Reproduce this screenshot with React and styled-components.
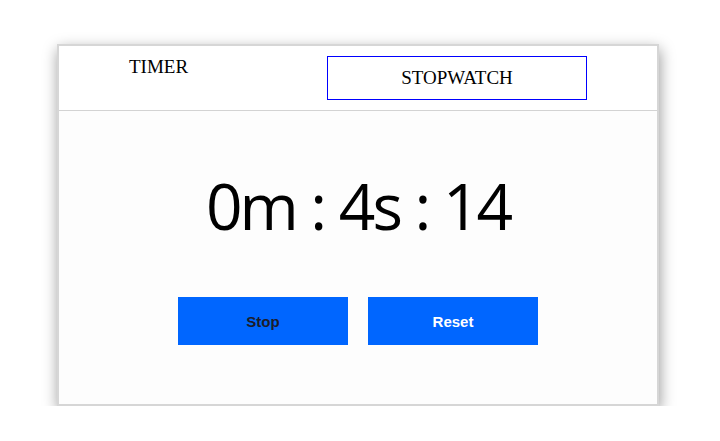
import React, { useState } from "react";
import styled, { createGlobalStyle } from "styled-components";

const GlobalStyle = createGlobalStyle`
  body {
    margin: 0;
    background: #ffffff;
    font-family: "Liberation Serif", serif;
  }
`;

function App() {
  const [tab, setTab] = useState("stopwatch");
  return (
    <>
      <GlobalStyle />
      <Page>
        <Card>
          <Tabs>
            <Tab active={tab === "timer"} onClick={() => setTab("timer")}>
              TIMER
            </Tab>
            <Tab active={tab === "stopwatch"} onClick={() => setTab("stopwatch")}>
              STOPWATCH
            </Tab>
          </Tabs>
          <Body>
            <Time>0m : 4s : 14</Time>
            <Controls>
              <Button>Stop</Button>
              <Button light>Reset</Button>
            </Controls>
          </Body>
        </Card>
      </Page>
    </>
  );
}
export default App;

const Page = styled.div`
  padding: 44px 0 0 57px;
`;

const Card = styled.div`
  width: 598px;
  height: 358px;
  border: 2px solid #d6d6d6;
  background: #fdfdfd;
  box-shadow: 1px 5px 14px rgba(0, 0, 0, 0.4);
  display: flex;
  flex-direction: column;
`;

const Tabs = styled.div`
  display: flex;
  justify-content: space-between;
  align-items: flex-start;
  padding: 10px 70px 10px 70px;
  background: #ffffff;
  border-bottom: 1px solid #d3d3d3;
`;

const Tab = styled.div`
  font-family: "Liberation Serif", serif;
  font-size: 19px;
  line-height: 22px;
  color: #000;
  cursor: pointer;
  padding: ${(props) => (props.active ? "10px 0" : "0")};
  width: ${(props) => (props.active ? "258px" : "auto")};
  text-align: center;
  border: ${(props) => (props.active ? "1px solid #0000ff" : "none")};
`;

const Body = styled.div`
  flex: 1;
  display: flex;
  flex-direction: column;
  align-items: center;
`;

const Time = styled.div`
  margin-top: 55px;
  font-family: "Open Sans", sans-serif;
  font-size: 64px;
  line-height: 80px;
  letter-spacing: -3px;
  word-spacing: 1px;
  color: #000;
`;

const Controls = styled.div`
  display: flex;
  gap: 20px;
  margin-top: 51px;
`;

const Button = styled.button`
  width: 170px;
  height: 48px;
  border: none;
  background: #0066ff;
  font-family: "Liberation Sans", Arial, sans-serif;
  font-weight: bold;
  font-size: 15px;
  color: ${(props) => (props.light ? "#ffffff" : "#1c1c2a")};
  cursor: pointer;
`;
